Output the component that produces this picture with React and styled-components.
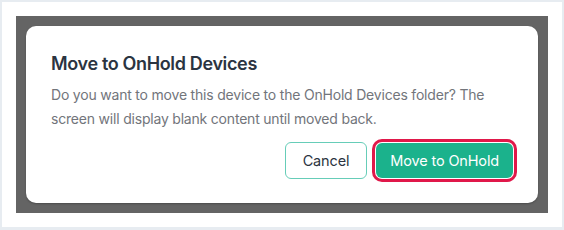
import React from "react";
import styled, { createGlobalStyle } from "styled-components";

const GlobalStyle = createGlobalStyle`
  html, body {
    margin: 0;
    padding: 0;
    background: #e7ecf1;
    font-family: Inter, "Noto Sans", sans-serif;
  }
`;

export default function App() {
  return (
    <>
      <GlobalStyle />
      <Frame>
        <Overlay>
          <Modal>
            <Title>Move to OnHold Devices</Title>
            <Body>
              Do you want to move this device to the OnHold Devices folder? The
              screen will display blank content until moved back.
            </Body>
            <Actions>
              <Button>Cancel</Button>
              <Button primary focused>
                Move to OnHold
              </Button>
            </Actions>
          </Modal>
        </Overlay>
      </Frame>
    </>
  );
}

const Frame = styled.div`
  margin: 2px 2px 0 2px;
  height: 225px;
  background: #ffffff;
  padding: 14px;
  box-sizing: border-box;
`;

const Overlay = styled.div`
  height: 197px;
  background: #646464;
  padding: 10px;
  box-sizing: border-box;
`;

const Modal = styled.div`
  height: 177px;
  background: #ffffff;
  border-radius: 10px;
  box-shadow: 0 1px 2px rgba(0, 0, 0, 0.25);
  padding: 26px 25px 24px 25px;
  box-sizing: border-box;
  display: flex;
  flex-direction: column;
`;

const Title = styled.h2`
  margin: 0;
  font-size: 18px;
  line-height: 24px;
  font-weight: 600;
  letter-spacing: -0.35px;
  color: #2b3441;
`;

const Body = styled.p`
  margin: 7px 0 0 0;
  font-size: 14px;
  line-height: 24px;
  letter-spacing: -0.2px;
  color: #72757b;
`;

const Actions = styled.div`
  margin-top: auto;
  display: flex;
  justify-content: flex-end;
  align-items: center;
  gap: 9px;
`;

const Button = styled.button`
  font-family: inherit;
  font-size: 14.5px;
  letter-spacing: -0.15px;
  height: ${(p) => (p.primary ? "35px" : "37px")};
  padding: 0 ${(p) => (p.primary ? "14px" : "17px")};
  border-radius: 6px;
  cursor: pointer;
  border: ${(p) => (p.primary ? "none" : "1px solid #66cdb8")};
  background: ${(p) => (p.primary ? "#1bb28c" : "#ffffff")};
  color: ${(p) => (p.primary ? "#ffffff" : "#2b3441")};
  box-shadow: ${(p) =>
    p.focused ? "0 0 0 1px #ffffff, 0 0 0 4px #e0184a" : "none"};
`;
